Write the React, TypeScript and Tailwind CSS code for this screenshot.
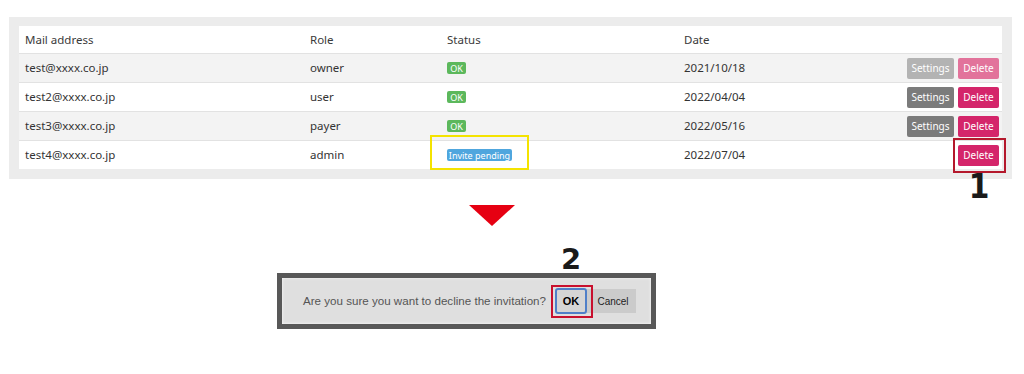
const rows = [
  { mail: "test@xxxx.co.jp", role: "owner", status: "ok", date: "2021/10/18", settings: true, muted: true },
  { mail: "test2@xxxx.co.jp", role: "user", status: "ok", date: "2022/04/04", settings: true, muted: false },
  { mail: "test3@xxxx.co.jp", role: "payer", status: "ok", date: "2022/05/16", settings: true, muted: false },
  { mail: "test4@xxxx.co.jp", role: "admin", status: "pending", date: "2022/07/04", settings: false, muted: false },
]

function StatusBadge({ status }: { status: string }) {
  if (status === "ok") {
    return (
      <span className="inline-flex h-[12px] w-[19px] items-center justify-center rounded-[2px] bg-[#5cb85c] text-[9px] leading-none text-white">
        OK
      </span>
    )
  }
  return (
    <span className="relative inline-flex">
      <span className="inline-flex h-[12px] w-[65px] items-center justify-center rounded-[2px] bg-[#4fa6de] text-[9px] leading-none text-white">
        Invite pending
      </span>
      <span className="pointer-events-none absolute -left-[17px] -right-[17px] -top-[14px] -bottom-[9px] border-2 border-[#f4e300]" />
    </span>
  )
}

export default function App() {
  return (
    <div className="h-[374px] w-[1024px] overflow-hidden bg-white pt-[17px] font-['Noto_Sans',sans-serif]">
      <div className="ml-[9px] mr-[12px] bg-[#ececec] px-[10px] pb-[10px] pt-[9px]">
        <div className="bg-white text-[11.5px] text-[#333]">
          <div className="flex h-[27px] items-center text-[#3a3a3a]">
            <div className="w-[285px] pl-[6px]">Mail address</div>
            <div className="w-[137px] pl-[6px]">Role</div>
            <div className="w-[237px] pl-[6px]">Status</div>
            <div className="flex-1 pl-[6px]">Date</div>
          </div>
          {rows.map((r, i) => (
            <div
              key={r.mail}
              className={
                "flex h-[29px] items-center border-t border-[#e2e2e2] " + (i % 2 === 0 ? "bg-[#f3f3f3]" : "bg-white")
              }
            >
              <div className="w-[285px] pl-[6px]">{r.mail}</div>
              <div className="w-[137px] pl-[6px]">{r.role}</div>
              <div className="flex w-[237px] pl-[6px]">
                <StatusBadge status={r.status} />
              </div>
              <div className="flex-1 pl-[6px]">{r.date}</div>
              <div className="flex items-center gap-[4px] pr-[3px]">
                {r.settings && (
                  <button
                    className={
                      "h-[21px] w-[47px] rounded-[2px] text-[10px] text-white " +
                      (r.muted ? "bg-[#b3b3b3]" : "bg-[#7b7b7b]")
                    }
                  >
                    Settings
                  </button>
                )}
                <span className="relative inline-flex">
                  <button
                    className={
                      "h-[21px] w-[41px] rounded-[2px] text-[10px] text-white " +
                      (r.muted ? "bg-[#e2739b]" : "bg-[#d4256a]")
                    }
                  >
                    Delete
                  </button>
                  {!r.settings && (
                    <>
                      <span className="pointer-events-none absolute -left-[5px] -right-[7px] -top-[7px] -bottom-[7px] border-2 border-[#b4182c]" />
                      <span className="absolute left-1/2 top-[25px] -translate-x-1/2 scale-x-90 font-['DejaVu_Sans',sans-serif] text-[33px] font-bold leading-none text-[#1a1a1a]">
                        1
                      </span>
                    </>
                  )}
                </span>
              </div>
            </div>
          ))}
        </div>
      </div>

      <div className="ml-[469px] mt-[26px] h-0 w-0 border-l-[23px] border-r-[23px] border-t-[21px] border-l-transparent border-r-transparent border-t-[#e60012]" />

      <div className="ml-[277px] mt-[47px] w-[379px] border-[5px] border-[#585858] bg-[#dfdfdf] font-['Liberation_Sans',sans-serif] shadow-[inset_0_0_3px_rgba(255,255,255,0.9)]">
        <div className="flex h-[46px] items-center pl-[21px] pr-[14px]">
          <span className="text-[11.6px] text-[#555]">Are you sure you want to decline the invitation?</span>
          <span className="relative ml-[9px] inline-flex">
            <button className="h-[26px] w-[32px] rounded-[3px] border-2 border-[#4f7fc8] bg-[#d5d5d5] text-[11px] font-bold text-black">
              OK
            </button>
            <span className="pointer-events-none absolute -left-[4px] -right-[6px] -top-[3px] -bottom-[4px] border-2 border-[#c8102e]" />
            <span className="absolute left-1/2 top-[-43px] -translate-x-1/2 font-['DejaVu_Sans',sans-serif] text-[29px] font-bold leading-none text-[#1a1a1a]">
              2
            </span>
          </span>
          <button className="h-[24px] w-[49px] bg-[#cbcbcb] pl-[3px] text-[10px] text-[#222]">Cancel</button>
        </div>
      </div>
    </div>
  )
}
